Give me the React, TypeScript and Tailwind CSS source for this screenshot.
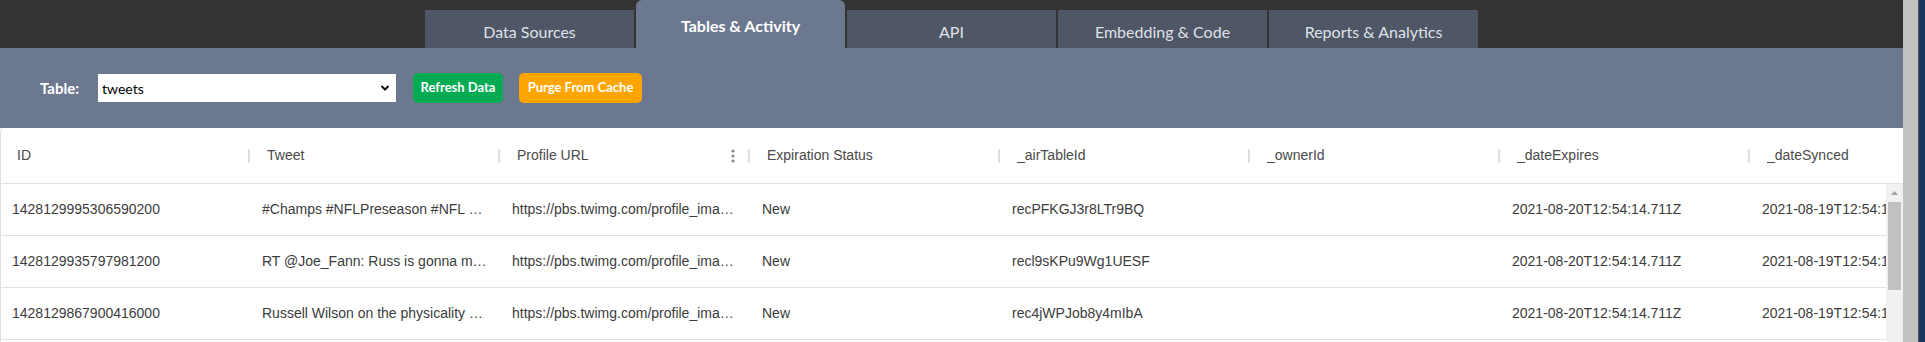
import React from 'react';

const tabs = ['Data Sources', 'Tables & Activity', 'API', 'Embedding & Code', 'Reports & Analytics'];
const activeTab = 'Tables & Activity';

const columns = ['ID', 'Tweet', 'Profile URL', 'Expiration Status', '_airTableId', '_ownerId', '_dateExpires', '_dateSynced'];

const rows: string[][] = [
  [
    '1428129995306590200',
    '#Champs #NFLPreseason #NFL #Seahawks #GoHawks',
    'https://pbs.twimg.com/profile_images/1234567890/photo_normal.jpg',
    'New',
    'recPFKGJ3r8LTr9BQ',
    '',
    '2021-08-20T12:54:14.711Z',
    '2021-08-19T12:54:14.711Z',
  ],
  [
    '1428129935797981200',
    'RT @Joe_Fann: Russ is gonna make this one look easy',
    'https://pbs.twimg.com/profile_images/1234567891/photo_normal.jpg',
    'New',
    'recl9sKPu9Wg1UESF',
    '',
    '2021-08-20T12:54:14.711Z',
    '2021-08-19T12:54:14.711Z',
  ],
  [
    '1428129867900416000',
    'Russell Wilson on the physicality of the game tonight',
    'https://pbs.twimg.com/profile_images/1234567892/photo_normal.jpg',
    'New',
    'rec4jWPJob8y4mIbA',
    '',
    '2021-08-20T12:54:14.711Z',
    '2021-08-19T12:54:14.711Z',
  ],
];

const App: React.FC = () => {
  return (
    <div className="flex w-[1925px] h-[342px] overflow-hidden bg-white">
      <div className="w-[1903px] shrink-0 flex flex-col">
        {/* top nav */}
        <div className="h-[48px] bg-[#333333] flex justify-center items-end gap-[2px] font-['Lato',sans-serif]">
          {tabs.map((tab) =>
            tab === activeTab ? (
              <div
                key={tab}
                className="w-[209px] h-[48px] bg-[#6c788f] rounded-t-[6px] text-center pt-[16px] leading-[20px] text-[16px] font-bold text-white"
              >
                {tab}
              </div>
            ) : (
              <div
                key={tab}
                className="w-[209px] h-[38px] bg-[#4f5665] text-center pt-[12px] leading-[20px] text-[16px] text-[#dfe2e8]"
              >
                {tab}
              </div>
            )
          )}
        </div>

        {/* toolbar */}
        <div className="h-[80px] bg-[#6c788f] flex items-center pl-[40px] font-['Lato',sans-serif]">
          <span className="text-[15px] font-bold text-white w-[58px]">Table:</span>
          <div className="relative w-[298px] h-[28px] bg-white">
            <select className="appearance-none w-full h-full bg-white pl-[4px] text-[14px] text-black outline-none font-['Lato',sans-serif]">
              <option>tweets</option>
            </select>
            <svg
              className="absolute right-[6px] top-[10px] w-[10px] h-[8px] pointer-events-none"
              viewBox="0 0 10 8"
              fill="none"
              stroke="#111"
              strokeWidth="2"
            >
              <path d="M1.5 2 L5 5.5 L8.5 2" />
            </svg>
          </div>
          <button className="ml-[17px] w-[90px] h-[30px] rounded-[5px] bg-[#03ac53] text-white text-[13px] font-bold">
            Refresh Data
          </button>
          <button className="ml-[16px] w-[123px] h-[30px] rounded-[5px] bg-[#ffa500] text-white text-[13px] font-bold">
            Purge From Cache
          </button>
        </div>

        {/* data grid */}
        <div className="flex-1 flex flex-col bg-white border-l border-[#e0e0e0] rounded-t-[4px] overflow-hidden font-['Liberation_Sans',Arial,sans-serif] text-[14px]">
          <div className="h-[56px] shrink-0 flex border-b border-[#e0e0e0] overflow-hidden text-[#4a4a4a]">
            {columns.map((col) => (
              <div key={col} className="w-[250px] shrink-0 flex items-center pl-[16px]">
                <span className="flex-1 truncate">{col}</span>
                {col === 'Profile URL' && (
                  <svg className="w-[4px] h-[14px] mr-[13px]" viewBox="0 0 4 14" fill="#8a8a8a">
                    <circle cx="2" cy="2" r="1.6" />
                    <circle cx="2" cy="7" r="1.6" />
                    <circle cx="2" cy="12" r="1.6" />
                  </svg>
                )}
                <div className="w-[2px] h-[14px] bg-[#e0e0e0] mr-[1px]" />
              </div>
            ))}
          </div>
          <div className="flex-1 flex overflow-hidden">
            <div className="flex-1 overflow-hidden text-[#3c3c3c]">
              {rows.map((row) => (
                <div key={row[0]} className="h-[52px] flex border-b border-[#e0e0e0] w-[2000px]">
                  {row.map((cell, i) => (
                    <div key={i} className="w-[250px] min-w-0 shrink-0 flex items-center pl-[11px] pr-[12px] overflow-hidden">
                      <span className="block min-w-0 truncate">{cell}</span>
                    </div>
                  ))}
                </div>
              ))}
            </div>
            <div className="w-[17px] shrink-0 bg-[#f1f1f1] flex flex-col items-center">
              <div className="h-[17px] flex items-center justify-center">
                <svg className="w-[7px] h-[4px]" viewBox="0 0 7 4" fill="#a3a3a3">
                  <path d="M0 4 L3.5 0 L7 4 Z" />
                </svg>
              </div>
              <div className="w-[13px] h-[88px] bg-[#c1c1c1] mt-px" />
            </div>
          </div>
        </div>
      </div>
      <div className="w-[16px] shrink-0 bg-[#c1c1c1] border-r border-[#555]" />
      <div className="flex-1 bg-[#1b365d]" />
    </div>
  );
};

export default App;
